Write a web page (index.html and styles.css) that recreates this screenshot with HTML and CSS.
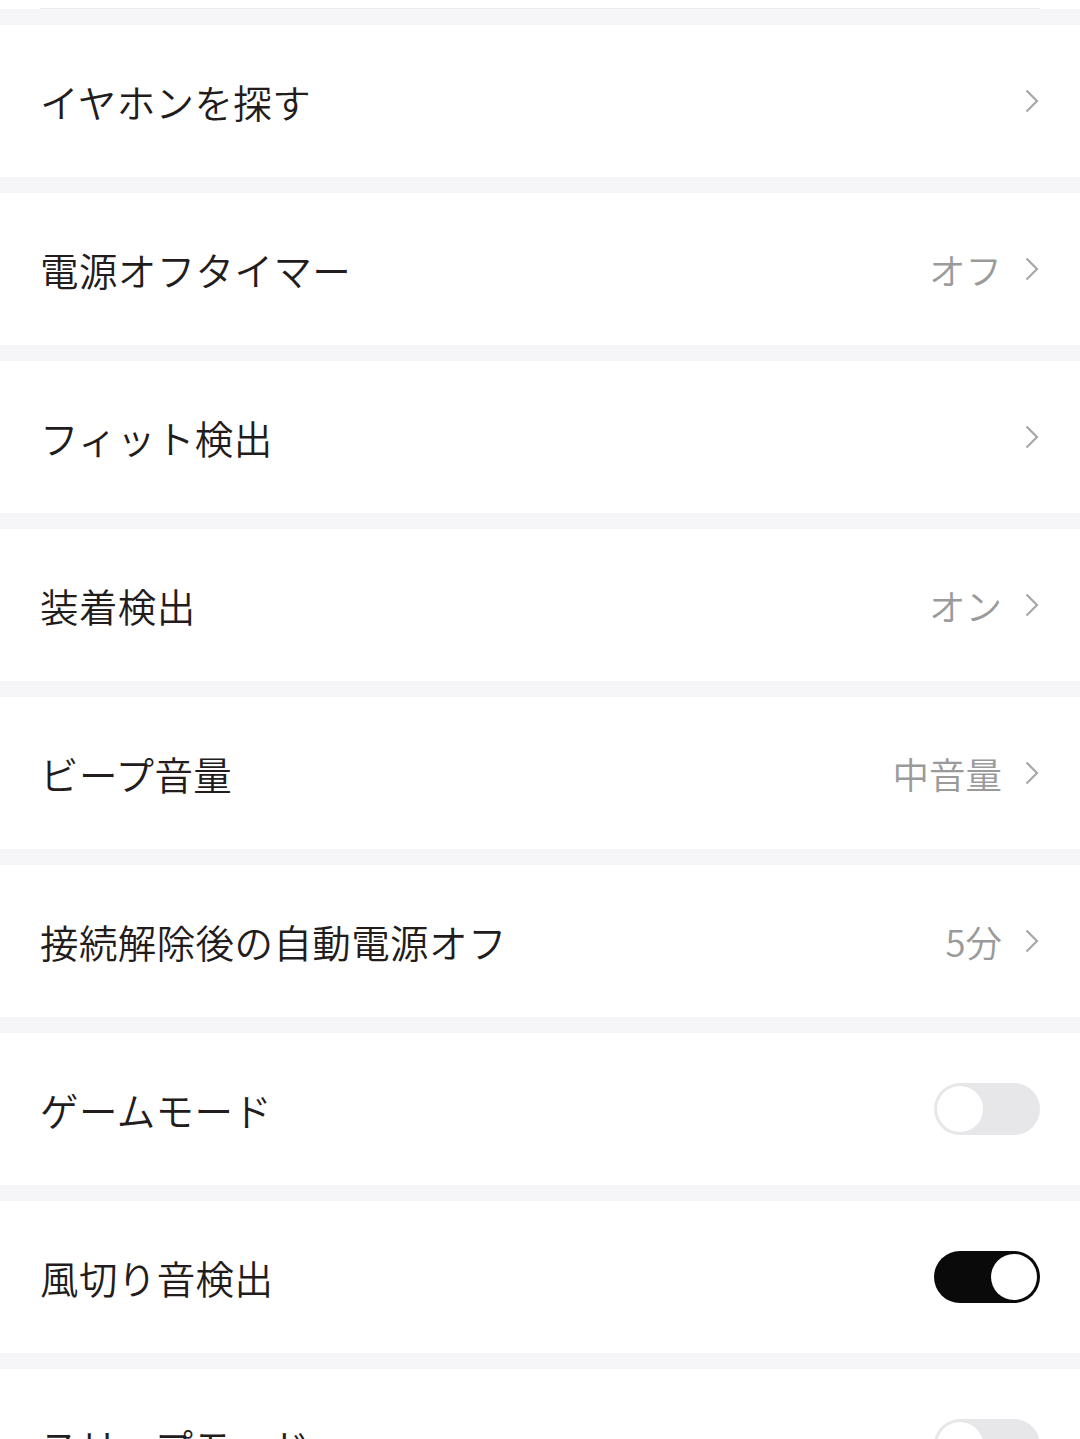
FILE: index.html
```html
<!DOCTYPE html>
<html lang="ja">
<head>
<meta charset="utf-8">
<link rel="stylesheet" href="styles.css">
</head>
<body>
<div class="page">
  <div class="prev"><div class="prev-line"></div></div>
  <div class="list">
    <div class="row"><span class="label">イヤホンを探す</span><span class="right"><svg class="chev" viewBox="0 0 14 24"><path d="M1.5 1.5 L12 12 L1.5 22.5"/></svg></span></div>
    <div class="row"><span class="label">電源オフタイマー</span><span class="right"><span class="value">オフ</span><svg class="chev" viewBox="0 0 14 24"><path d="M1.5 1.5 L12 12 L1.5 22.5"/></svg></span></div>
    <div class="row"><span class="label">フィット検出</span><span class="right"><svg class="chev" viewBox="0 0 14 24"><path d="M1.5 1.5 L12 12 L1.5 22.5"/></svg></span></div>
    <div class="row"><span class="label">装着検出</span><span class="right"><span class="value">オン</span><svg class="chev" viewBox="0 0 14 24"><path d="M1.5 1.5 L12 12 L1.5 22.5"/></svg></span></div>
    <div class="row"><span class="label">ビープ音量</span><span class="right"><span class="value">中音量</span><svg class="chev" viewBox="0 0 14 24"><path d="M1.5 1.5 L12 12 L1.5 22.5"/></svg></span></div>
    <div class="row"><span class="label">接続解除後の自動電源オフ</span><span class="right"><span class="value">5分</span><svg class="chev" viewBox="0 0 14 24"><path d="M1.5 1.5 L12 12 L1.5 22.5"/></svg></span></div>
    <div class="row"><span class="label">ゲームモード</span><span class="toggle"><span class="knob"></span></span></div>
    <div class="row"><span class="label">風切り音検出</span><span class="toggle on"><span class="knob"></span></span></div>
    <div class="row"><span class="label">スリープモード</span><span class="toggle"><span class="knob"></span></span></div>
  </div>
</div>
</body>
</html>
```

FILE: styles.css
```css
html, body {
  margin: 0;
  padding: 0;
  background: #f6f6f8;
}
body {
  width: 1080px;
  height: 1439px;
  overflow: hidden;
  font-family: "Noto Sans CJK JP", "Noto Sans", sans-serif;
}
.page {
  display: flex;
  flex-direction: column;
}
.prev {
  height: 9px;
  background: #ffffff;
  display: flex;
  align-items: flex-end;
  padding: 0 40px;
}
.prev-line {
  flex: 1;
  height: 1px;
  background: #ececee;
}
.list {
  display: flex;
  flex-direction: column;
  gap: 16px;
  padding-top: 16px;
}
.row {
  height: 152px;
  flex-shrink: 0;
  background: #ffffff;
  display: flex;
  align-items: center;
  justify-content: space-between;
  padding: 0 40px;
}
.label {
  font-size: 38.5px;
  font-weight: 350;
  color: #221c1c;
  letter-spacing: 0.4px;
}
.right {
  display: flex;
  align-items: center;
  gap: 23px;
}
.value {
  font-size: 36.5px;
  font-weight: 350;
  color: #9a9a9a;
}
.chev {
  width: 14px;
  height: 24px;
  fill: none;
  stroke: #a8a8a8;
  stroke-width: 2.2;
  margin-right: 1px;
}
.toggle {
  position: relative;
  width: 106px;
  height: 52px;
  border-radius: 26px;
  background: #e7e7e9;
  box-sizing: border-box;
}
.toggle .knob {
  position: absolute;
  top: 3px;
  left: 3px;
  width: 46px;
  height: 46px;
  border-radius: 50%;
  background: #ffffff;
}
.toggle.on {
  background: #0a0a0a;
}
.toggle.on .knob {
  left: auto;
  right: 3px;
}
```
